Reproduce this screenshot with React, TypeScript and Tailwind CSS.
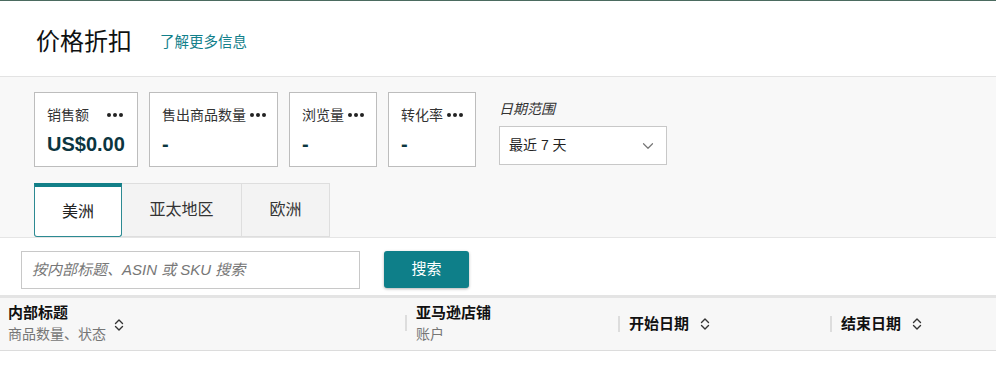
import { ChevronDown } from 'lucide-react';

const FONT = { fontFamily: '"Liberation Sans", Arial, "Noto Sans CJK SC", sans-serif' };

function Dots() {
  return (
    <span className="inline-flex items-center gap-[2px] ml-1 align-middle">
      <span className="w-[4px] h-[4px] rounded-full bg-[#222]" />
      <span className="w-[4px] h-[4px] rounded-full bg-[#222]" />
      <span className="w-[4px] h-[4px] rounded-full bg-[#222]" />
    </span>
  );
}

function SortIcon() {
  return (
    <svg width="10" height="14" viewBox="0 0 10 14" fill="none" stroke="#333" strokeWidth="1.4" strokeLinecap="round" strokeLinejoin="round">
      <path d="M1.5 5.5 L5 2 L8.5 5.5" />
      <path d="M1.5 8.5 L5 12 L8.5 8.5" />
    </svg>
  );
}

const metrics = [
  { label: '销售额', value: 'US$0.00', width: 'w-[104px]', spread: true },
  { label: '售出商品数量', value: '-', width: 'w-[129px]', spread: false },
  { label: '浏览量', value: '-', width: 'w-[88px]', spread: false },
  { label: '转化率', value: '-', width: 'w-[88px]', spread: false },
];

export default function App() {
  return (
    <div className="w-full min-h-[370px] bg-white border-t border-[#4b6b60] text-[#111]" style={FONT}>
      {/* Header */}
      <div className="h-[76px] flex items-center pl-[36px] pt-[6px] border-b border-[#e3e3e3]">
        <h1 className="text-[24px] leading-none text-[#0f1111]">价格折扣</h1>
        <a className="ml-[28px] mt-[3px] text-[14.5px] text-[#12808b]">了解更多信息</a>
      </div>

      {/* Metrics + tabs */}
      <div className="bg-[#f8f8f8] pl-[34px] pt-[15px] border-b border-[#e5e5e5]">
        <div className="flex items-start">
          {metrics.map((m, i) => (
            <div
              key={m.label}
              className={`${m.width} h-[75px] bg-white border border-[#bdbdbd] pl-[12px] pr-[14px] pt-[12px] ${i > 0 ? 'ml-[11px]' : ''}`}
            >
              <div className={`flex items-center text-[14px] leading-[20px] text-[#333] whitespace-nowrap ${m.spread ? 'justify-between' : ''}`}>
                <span>{m.label}</span>
                <Dots />
              </div>
              <div className="mt-[6px] text-[20px] leading-[26px] font-bold text-[#0b3540]">{m.value}</div>
            </div>
          ))}
          <div className="ml-[23px] pt-[8px]">
            <div className="text-[14px] leading-[18px] italic text-[#333]">日期范围</div>
            <div className="mt-[8px] w-[168px] h-[39px] bg-white border border-[#c8c8c8] flex items-center justify-between pl-[9px] pr-[9px]">
              <span className="text-[14px] text-[#222]">最近 7 天</span>
              <ChevronDown className="w-[18px] h-[18px] text-[#777]" strokeWidth={1.6} />
            </div>
          </div>
        </div>

        {/* Tabs */}
        <div className="flex mt-[16px]">
          <div className="w-[88px] h-[54px] bg-white border border-[#2c8a92] border-t-[4px] border-t-[#127f88] rounded-b-[3px] flex items-center justify-center text-[16px] text-[#222] relative z-10 -mb-px">
            美洲
          </div>
          <div className="w-[120px] h-[54px] bg-[#f3f3f3] border border-l-0 border-[#dedede] flex items-center justify-center text-[16px] text-[#333]">
            亚太地区
          </div>
          <div className="w-[88px] h-[54px] bg-[#f3f3f3] border border-l-0 border-[#dedede] flex items-center justify-center text-[16px] text-[#333]">
            欧洲
          </div>
        </div>
      </div>

      {/* Search */}
      <div className="h-[57px] flex items-start pt-[13px] pl-[21px]">
        <div className="w-[339px] h-[38px] border border-[#c8c8c8] flex items-center pl-[10px]">
          <span className="text-[15px] italic text-[#777]">按内部标题、ASIN 或 SKU 搜索</span>
        </div>
        <button className="ml-[24px] w-[85px] h-[37px] bg-[#0e7f89] rounded-[3px] text-white text-[15px] shadow-[0_1px_3px_rgba(0,0,0,0.3)]">
          搜索
        </button>
      </div>

      {/* Table header */}
      <div className="h-[56px] bg-[#f7f7f7] border-t-[3px] border-[#e4e4e4] border-b border-b-[#dcdcdc] flex items-center">
        <div className="w-[405px] pl-[8px] flex items-center">
          <div>
            <div className="text-[15px] leading-[20px] font-bold text-[#111]">内部标题</div>
            <div className="text-[14px] leading-[22px] text-[#767676]">商品数量、状态</div>
          </div>
          <span className="ml-[8px] mt-[1px]"><SortIcon /></span>
        </div>
        <div className="w-[213px] flex items-center">
          <span className="w-[2px] h-[16px] bg-[#dddddd] mt-[-2px]" />
          <div className="ml-[9px]">
            <div className="text-[15px] leading-[20px] font-bold text-[#111]">亚马逊店铺</div>
            <div className="text-[14px] leading-[22px] text-[#767676]">账户</div>
          </div>
        </div>
        <div className="w-[212px] flex items-center">
          <span className="w-[2px] h-[16px] bg-[#dddddd]" />
          <span className="ml-[9px] text-[15px] font-bold text-[#111]">开始日期</span>
          <span className="ml-[11px]"><SortIcon /></span>
        </div>
        <div className="flex-1 flex items-center">
          <span className="w-[2px] h-[16px] bg-[#dddddd]" />
          <span className="ml-[9px] text-[15px] font-bold text-[#111]">结束日期</span>
          <span className="ml-[11px]"><SortIcon /></span>
        </div>
      </div>
    </div>
  );
}
